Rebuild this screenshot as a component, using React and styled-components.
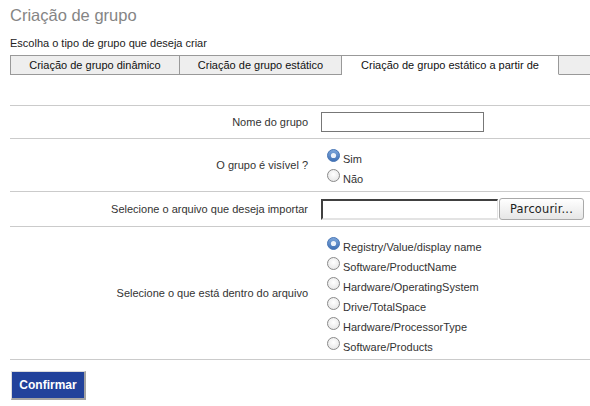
import React from "react";
import styled, { createGlobalStyle } from "styled-components";

const Global = createGlobalStyle`
  html, body { margin: 0; padding: 0; background: #fff; }
  body { font-family: "Liberation Sans", Arial, sans-serif; color: #333; }
  * { box-sizing: border-box; }
`;

const Page = styled.div`
  padding: 5px 0 0 10px;
  width: 590px;
  overflow: hidden;
`;

const Title = styled.h1`
  margin: 0;
  font-weight: normal;
  font-size: 16.5px;
  line-height: 20px;
  color: #858585;
`;

const Subtitle = styled.p`
  margin: 12px 0 0;
  font-size: 11px;
  line-height: 13px;
  color: #222;
`;

const Tabs = styled.div`
  display: flex;
  margin-top: 5px;
  height: 20px;
`;

const Tab = styled.div`
  width: ${(p) => (p.$w ? `${p.$w}px` : "auto")};
  flex: ${(p) => (p.$grow ? 1 : "none")};
  height: 20px;
  border: 1px solid #999;
  border-left: ${(p) => (p.$first ? "1px solid #999" : "none")};
  border-right: ${(p) => (p.$grow ? "none" : "1px solid #999")};
  border-bottom: ${(p) => (p.$active ? "1px solid transparent" : "1px solid #999")};
  background: ${(p) => (p.$active ? "#fff" : "#eeeeee")};
  font-size: 11px;
  line-height: 18px;
  text-align: center;
  color: #111;
  white-space: nowrap;
`;

const Form = styled.div`
  margin-top: 30px;
  border-top: 1px solid #cbcbcb;
`;

const Row = styled.div`
  display: grid;
  grid-template-columns: 310px 1fr;
  border-bottom: 1px solid #cbcbcb;
`;

const Label = styled.div`
  display: flex;
  align-items: center;
  justify-content: flex-end;
  padding-right: 12px;
  font-size: 11px;
  color: #333;
`;

const Value = styled.div`
  display: flex;
  align-items: ${(p) => (p.$top ? "flex-start" : "center")};
  padding: ${(p) => p.$pad || "6px 0"};
  padding-left: 1px;
`;

const TextInput = styled.input`
  width: 163px;
  height: 20px;
  border: 1px solid #777;
  margin: 0 0 0 0;
  padding: 0 3px;
  font-size: 11px;
`;

const FileBox = styled.div`
  display: flex;
  align-items: center;
  gap: 1px;
`;

const FileText = styled.div`
  width: 177px;
  height: 21px;
  border-top: 2px solid #404040;
  border-left: 2px solid #404040;
  border-bottom: 2px solid #e3e3e3;
  border-right: 1px solid #e3e3e3;
  background: #fff;
`;

const BrowseButton = styled.button`
  width: 85px;
  height: 22px;
  border: 1px solid #a9a9a9;
  border-radius: 3px;
  background: linear-gradient(#ffffff, #e6e6e6);
  font-family: "DejaVu Sans", Verdana, sans-serif;
  font-size: 11.4px;
  color: #222;
  letter-spacing: 0.2px;
  padding: 0;
`;

const RadioGroup = styled.div`
  display: flex;
  flex-direction: column;
  margin-left: 6px;
`;

const RadioItem = styled.label`
  display: flex;
  align-items: flex-start;
  height: 20px;
  font-size: 11px;
  line-height: 20px;
  color: #333;
`;

const RadioMark = styled.svg`
  width: 13px;
  height: 13px;
  margin-right: 3px;
  flex: none;
`;

const ConfirmButton = styled.button`
  margin: 11px 0 0 1px;
  width: 75px;
  height: 29px;
  background: #22429b;
  color: #fff;
  font-family: "Liberation Sans", Arial, sans-serif;
  font-weight: bold;
  font-size: 12px;
  border-top: 1px solid #dcdcdc;
  border-left: 1px solid #dcdcdc;
  border-right: 2px solid #a3a3a3;
  border-bottom: 2px solid #a3a3a3;
  padding: 0;
`;

function Radio({ checked, children }) {
  return (
    <RadioItem>
      <RadioMark viewBox="0 0 13 13">
        <defs>
          <radialGradient id="rg" cx="50%" cy="40%" r="60%">
            <stop offset="0%" stopColor="#ffffff" />
            <stop offset="100%" stopColor="#e6e6e6" />
          </radialGradient>
          <linearGradient id="bg" x1="0" y1="0" x2="0" y2="1">
            <stop offset="0%" stopColor="#7fa8dc" />
            <stop offset="100%" stopColor="#3e6fb4" />
          </linearGradient>
        </defs>
        {checked ? (
          <>
            <circle cx="6.5" cy="6.5" r="6" fill="url(#bg)" stroke="#4a77b5" strokeWidth="1" />
            <circle cx="6.5" cy="6.5" r="2.6" fill="#eef3fa" />
          </>
        ) : (
          <circle cx="6.5" cy="6.5" r="6" fill="url(#rg)" stroke="#8a8a8a" strokeWidth="1" />
        )}
      </RadioMark>
      {children}
    </RadioItem>
  );
}

const options = [
  "Registry/Value/display name",
  "Software/ProductName",
  "Hardware/OperatingSystem",
  "Drive/TotalSpace",
  "Hardware/ProcessorType",
  "Software/Products",
];

export default function App() {
  return (
    <>
      <Global />
      <Page>
        <Title>Criação de grupo</Title>
        <Subtitle>Escolha o tipo de grupo que deseja criar</Subtitle>
        <Tabs>
          <Tab $first $w={170}>Criação de grupo dinâmico</Tab>
          <Tab $w={162}>Criação de grupo estático</Tab>
          <Tab $w={217} $active>Criação de grupo estático a partir de</Tab>
          <Tab $grow />
        </Tabs>
        <Form>
          <Row>
            <Label>Nome do grupo</Label>
            <Value>
              <TextInput type="text" />
            </Value>
          </Row>
          <Row>
            <Label>O grupo é visível ?</Label>
            <Value $top $pad="10px 0 2px">
              <RadioGroup>
                <Radio checked>Sim</Radio>
                <Radio>Não</Radio>
              </RadioGroup>
            </Value>
          </Row>
          <Row>
            <Label>Selecione o arquivo que deseja importar</Label>
            <Value>
              <FileBox>
                <FileText />
                <BrowseButton>Parcourir...</BrowseButton>
              </FileBox>
            </Value>
          </Row>
          <Row>
            <Label>Selecione o que está dentro do arquivo</Label>
            <Value $top $pad="10px 0 2px">
              <RadioGroup>
                {options.map((o, i) => (
                  <Radio key={o} checked={i === 0}>
                    {o}
                  </Radio>
                ))}
              </RadioGroup>
            </Value>
          </Row>
        </Form>
        <ConfirmButton>Confirmar</ConfirmButton>
      </Page>
    </>
  );
}
